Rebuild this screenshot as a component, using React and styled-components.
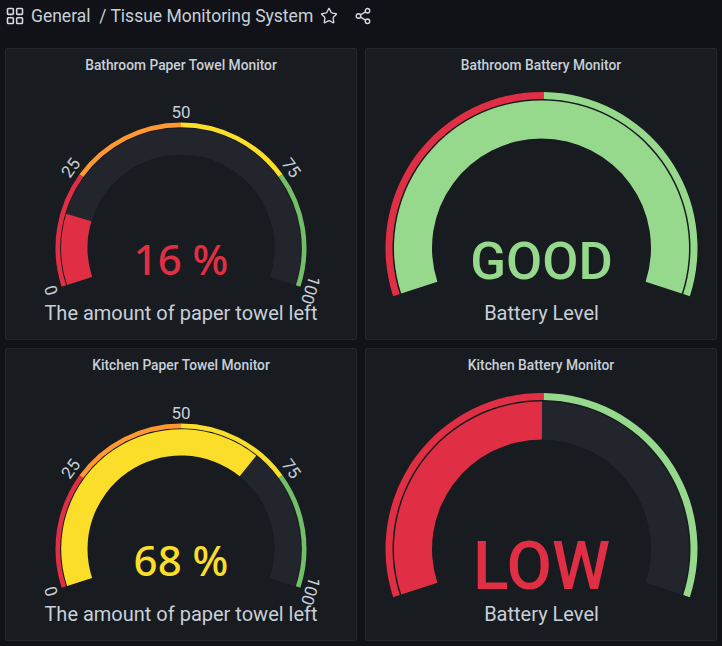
import React from 'react'
import styled, { createGlobalStyle } from 'styled-components'
import { LayoutGrid, Star, Share2 } from 'lucide-react'

const RED = '#e02f44'
const ORANGE = '#ff9830'
const YELLOW = '#fade2a'
const GREEN = '#73bf69'
const LIGHT_GREEN = '#96d98d'
const TRACK = '#22252b'

const GlobalStyle = createGlobalStyle`
  html, body {
    margin: 0;
    background: #111217;
  }
  body {
    font-family: Roboto, "Liberation Sans", sans-serif;
    color: #c7d0d9;
  }
`

const Page = styled.div`
  width: 722px;
  height: 646px;
  overflow: hidden;
  box-sizing: border-box;
  padding: 0 5px;
`

const Toolbar = styled.header`
  display: flex;
  align-items: center;
  height: 48px;
  padding: 0 0 16px 0;
  box-sizing: border-box;
`

const IconSlot = styled.span`
  display: flex;
  margin-left: ${(p) => p.$left || 0}px;
  color: #d8d9e3;
`

const Crumbs = styled.h1`
  margin: 0 0 0 6px;
  font-size: 17.5px;
  font-weight: 400;
  line-height: 24px;
  color: #c7d0d9;
  white-space: pre;
`

const Grid = styled.main`
  display: grid;
  grid-template-columns: 352px 352px;
  grid-template-rows: 292px 293px;
  gap: 8px;
`

const Panel = styled.section`
  display: flex;
  flex-direction: column;
  box-sizing: border-box;
  background: #181b1f;
  border: 1px solid #23262b;
  border-radius: 2px;
`

const PanelTitle = styled.h2`
  margin: 0;
  height: 31px;
  font-size: 13.8px;
  font-weight: 500;
  line-height: 33px;
  text-align: center;
  color: #c7d0d9;
`

const Chart = styled.svg`
  display: block;
  margin-top: auto;
`

const Tick = styled.text`
  font-size: 17px;
  fill: #c7d0d9;
  text-anchor: middle;
`

const Value = styled.text`
  font-family: ${(p) => (p.$percent ? '"Noto Sans", sans-serif' : 'Roboto, sans-serif')};
  font-size: ${(p) => p.$size}px;
  font-weight: 500;
  fill: ${(p) => p.$color};
  text-anchor: middle;
`

const Caption = styled.text`
  font-size: 20px;
  fill: #c7d0d9;
  text-anchor: middle;
`

// gauge runs 216deg, from 18deg below the horizon on the left to the same on the right
const pointAt = (cx, cy, r, frac) => {
  const a = ((-108 + 216 * frac) * Math.PI) / 180
  return [cx + r * Math.sin(a), cy - r * Math.cos(a)]
}

const sector = (cx, cy, outer, inner, from, to) => {
  const large = (to - from) * 216 > 180 ? 1 : 0
  const [x1, y1] = pointAt(cx, cy, outer, from)
  const [x2, y2] = pointAt(cx, cy, outer, to)
  const [x3, y3] = pointAt(cx, cy, inner, to)
  const [x4, y4] = pointAt(cx, cy, inner, from)
  return `M${x1} ${y1}A${outer} ${outer} 0 ${large} 1 ${x2} ${y2}L${x3} ${y3}A${inner} ${inner} 0 ${large} 0 ${x4} ${y4}Z`
}

const PAPER = {
  cx: 175,
  ring: [125.5, 120.8],
  arc: [119.8, 93.5],
  bands: [
    [0, 0.25, RED],
    [0.25, 0.5, ORANGE],
    [0.5, 0.75, YELLOW],
    [0.75, 1, GREEN],
  ],
  ticks: [0, 25, 50, 75, 100],
  caption: 'The amount of paper towel left',
}

const BATTERY = {
  cx: 175.5,
  ring: [156, 149],
  arc: [147.5, 109.5],
  bands: [
    [0, 0.504, RED],
    [0.504, 1, LIGHT_GREEN],
  ],
  ticks: [],
  caption: 'Battery Level',
}

const panels = [
  { title: 'Bathroom Paper Towel Monitor', gauge: PAPER, fill: 0.16, color: RED, text: '16 %', size: 42, base: 194.5, percent: true },
  { title: 'Bathroom Battery Monitor', gauge: BATTERY, fill: 1, color: LIGHT_GREEN, text: 'GOOD', size: 52.5, base: 198.5 },
  { title: 'Kitchen Paper Towel Monitor', gauge: PAPER, fill: 0.68, color: YELLOW, text: '68 %', size: 42, base: 194.5, percent: true },
  { title: 'Kitchen Battery Monitor', gauge: BATTERY, fill: 0.501, color: RED, text: 'LOW', size: 66, base: 208 },
]

const CY = 168

const Gauge = ({ gauge, fill, color, text, size, base, percent }) => {
  const { cx, ring, arc, bands, ticks, caption } = gauge
  return (
    <Chart width="350" height="259" viewBox="0 0 350 259">
      <path d={sector(cx, CY, arc[0], arc[1], 0, 1)} fill={TRACK} />
      <path d={sector(cx, CY, arc[0], arc[1], 0, fill)} fill={color} />
      {bands.map(([from, to, band]) => (
        <path key={from} d={sector(cx, CY, ring[0], ring[1], from, to)} fill={band} />
      ))}
      {ticks.map((tick) => {
        const [x, y] = pointAt(cx, CY, 130.5, tick / 100)
        return (
          <Tick key={tick} x={x} y={y} transform={`rotate(${-108 + 2.16 * tick} ${x} ${y})`}>
            {tick}
          </Tick>
        )
      })}
      <Value x={cx} y={base} $size={size} $color={color} $percent={percent}>
        {text}
      </Value>
      <Caption x={cx} y={240}>
        {caption}
      </Caption>
    </Chart>
  )
}

const App = () => (
  <Page>
    <GlobalStyle />
    <Toolbar>
      <IconSlot>
        <LayoutGrid size={20} strokeWidth={1.9} />
      </IconSlot>
      <Crumbs>{'General  / Tissue Monitoring System'}</Crumbs>
      <IconSlot $left={7}>
        <Star size={18} strokeWidth={1.8} />
      </IconSlot>
      <IconSlot $left={16}>
        <Share2 size={18} strokeWidth={1.8} />
      </IconSlot>
    </Toolbar>
    <Grid>
      {panels.map(({ title, ...rest }) => (
        <Panel key={title}>
          <PanelTitle>{title}</PanelTitle>
          <Gauge {...rest} />
        </Panel>
      ))}
    </Grid>
  </Page>
)

export default App
